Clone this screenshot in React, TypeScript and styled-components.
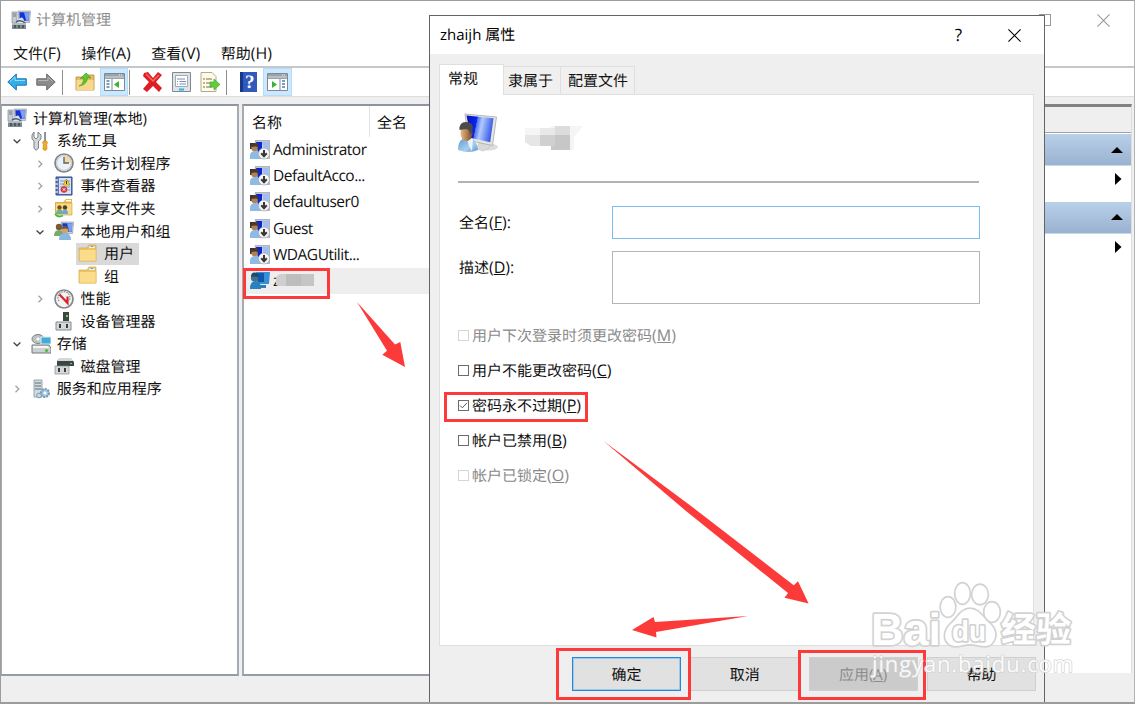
import React from 'react';
import styled, { createGlobalStyle, css } from 'styled-components';

const GlobalStyle = createGlobalStyle`
    * {
        box-sizing: border-box;
    }
    body {
        margin: 0;
        overflow: hidden;
        background: #efefef;
        color: #111;
        font: 15px/20px 'Open Sans', 'Noto Sans CJK SC', sans-serif;
        text-rendering: geometricPrecision;
    }
`;

const Screen = styled.div`
    position: relative;
    width: 1135px;
    height: 704px;
    overflow: hidden;
`;

const Window = styled.div`
    display: flex;
    flex-direction: column;
    width: 1135px;
    height: 704px;
    border: 1px solid #9c9c9c;
    border-bottom-width: 2px;
    border-right-color: #b4b4b4;
    background: #efefef;
`;

const TitleBar = styled.div`
    display: flex;
    align-items: center;
    height: 38px;
    padding: 0 24px 0 10px;
    background: #fff;
    color: #8e8e8e;
`;

const TitleText = styled.span`
    flex: 1;
    margin-left: 5px;
`;

const MaxBox = styled.span`
    width: 12px;
    height: 12px;
    margin-right: 46px;
    border: 1px solid #999;
`;

const MenuBar = styled.div`
    display: flex;
    align-items: center;
    gap: 20.5px;
    height: 27px;
    padding: 1px 12px 0;
    background: #fff;
`;

const Latin = styled.span`
    font-size: 16px;
`;

const Toolbar = styled.div`
    display: flex;
    align-items: center;
    height: 31px;
    padding-left: 3px;
    border-top: 2px solid #c3c8cc;
    border-bottom: 1px solid #dcdcdc;
    background: #fff;
`;

const ToolButton = styled.span<{ $width?: number; $active?: boolean }>`
    display: flex;
    align-items: center;
    justify-content: center;
    width: ${({ $width }) => $width || 28.7}px;
    height: 28px;
    ${({ $active }) => $active && css`
        background: #cce8ff;
        box-shadow: inset 0 0 0 1px #b5dcf8;
    `}
`;

const Separator = styled.span<{ $left: number; $right: number }>`
    width: 1px;
    height: 25px;
    margin: 0 ${({ $right }) => $right}px 0 ${({ $left }) => $left}px;
    background: #8d8d8d;
`;

const Panes = styled.div`
    display: grid;
    grid-template-columns: 238px 799px 1fr;
    column-gap: 3px;
    height: 572px;
    margin-top: 7px;
`;

const Pane = styled.div`
    border: 2px solid #a5abb2;
    border-top-color: #8f959d;
    border-bottom-color: #969ca4;
    background: #fff;
    overflow: hidden;
`;

const TreePane = styled(Pane)`
    border-left-width: 1px;
    padding-top: 1px;
`;

const TreeRow = styled.div<{ $level: number }>`
    display: flex;
    align-items: center;
    height: 22.55px;
    padding-left: ${({ $level }) => ($level ? $level * 23.7 - 16 : 5)}px;
    white-space: nowrap;
`;

const Arrow = styled.span`
    display: flex;
    justify-content: center;
    width: 14px;
    margin-right: 7px;
    padding-top: 1px;
`;

const TreeLabel = styled.span<{ $selected?: boolean }>`
    display: flex;
    align-items: center;
    gap: 6px;
    height: 22px;
    padding-right: 5px;
    ${({ $selected }) => $selected && css`
        background: #d9d9d9;
        box-shadow: -2px 0 #d9d9d9;
    `}
`;

const TreeText = styled.span`
    padding-top: 1px;
`;

const ListHeader = styled.div`
    display: flex;
    height: 30.5px;
    padding-left: 8px;
`;

const HeadCell = styled.span`
    width: 118px;
    margin-right: 7px;
    border-right: 1px solid #e2e2e2;
    height: 31px;
    line-height: 34px;
`;

const UserRow = styled.div<{ $selected?: boolean }>`
    display: flex;
    align-items: center;
    gap: 3px;
    height: 26.3px;
    padding-left: 6px;
    ${({ $selected }) => $selected && 'background: #eee;'}
`;

const UserName = styled.span`
    margin-top: -2px;
    font-size: 15.5px;
    letter-spacing: -.5px;
`;

const UserMosaic = styled.span`
    width: 38px;
    height: 12px;
    margin: -2px 0 0 -7px;
    border-radius: 5px 0 0 2px;
    background: linear-gradient(90deg, #cfcfcf 0 10px, #bdbdbd 10px 25px, #c5c5c5 25px);
`;

const ActionPane = styled.div`
    margin-right: 2px;
    border-top: 3px solid #828282;
    border-right: 1px solid #dedede;
    background: #fff;
    height: 569px;
`;

const ActionHead = styled.div`
    height: 26px;
    border-bottom: 1px solid #a0a0a0;
    background: #efefef;
    margin-bottom: 1px;
`;

const ActionGroup = styled.div`
    display: flex;
    align-items: center;
    justify-content: flex-end;
    height: 32px;
    padding-right: 8px;
    background: linear-gradient(#b9d0ea, #99b2d0);
    border-bottom: 1px solid #c2d8ef;
`;

const ActionItem = styled.div`
    display: flex;
    align-items: flex-start;
    justify-content: flex-end;
    height: 35.5px;
    padding: 7px 9px 0 0;
`;

const Dialog = styled.div`
    position: absolute;
    left: 429px;
    top: 15px;
    width: 616px;
    height: 687px;
    border: 1px solid #646464;
    border-bottom: none;
    background: #efefef;
`;

const DialogTitle = styled.div`
    display: flex;
    align-items: center;
    height: 38px;
    padding: 0 23px 0 10px;
    background: #fff;
    color: #000;
`;

const DialogName = styled.span`
    flex: 1;
`;

const HelpMark = styled.span`
    margin-right: 46px;
    padding-bottom: 1px;
    font-size: 17px;
`;

const TabStrip = styled.div`
    display: flex;
    align-items: flex-end;
    height: 40px;
    padding: 0 0 0 9px;
`;

const Tab = styled.div<{ $width: number; $inset?: number; $active?: boolean }>`
    width: ${({ $width }) => $width}px;
    height: 28px;
    padding: 4px 0 0 ${({ $inset }) => $inset || 4}px;
    border: 1px solid #dfdfdf;
    border-left: none;
    border-bottom: none;
    background: #f0f0f0;
    ${({ $active }) => $active && css`
        position: relative;
        height: 31px;
        margin-bottom: -1px;
        border-left: 1px solid #dfdfdf;
        background: #fff;
    `}
`;

const TabPanel = styled.div`
    width: 595px;
    height: 552px;
    margin-left: 9px;
    padding-left: 18px;
    border: 1px solid #dfdfdf;
    background: #fff;
`;

const Identity = styled.div`
    display: flex;
    width: 521px;
    height: 88px;
    margin-bottom: 23px;
    padding-top: 18px;
    border-bottom: 2px solid #b2b2b2;
`;

const NameMosaic = styled.svg`
    margin: 13px 0 0 27px;
`;

const Field = styled.div`
    display: grid;
    grid-template-columns: 154px 368px;
    margin-bottom: 12px;
`;

const FieldLabel = styled.label`
    padding: 6px 0 0 1px;
`;

const Input = styled.div<{ $height: number; $focus?: boolean }>`
    height: ${({ $height }) => $height}px;
    border: 1px solid ${({ $focus }) => ($focus ? '#7abcee' : '#b5b5b5')};
    background: #fff;
`;

const Options = styled.div`
    margin-top: 14px;
`;

const Option = styled.div<{ $disabled?: boolean }>`
    display: flex;
    align-items: center;
    gap: 3px;
    height: 35px;
    color: ${({ $disabled }) => ($disabled ? '#8a8a8a' : '#111')};
`;

const CheckBox = styled.span<{ $disabled?: boolean }>`
    display: flex;
    width: 11px;
    height: 11px;
    border: 1px solid ${({ $disabled }) => ($disabled ? '#d6d6d6' : '#6b6b6b')};
`;

const Buttons = styled.div`
    display: flex;
    gap: 9.3px;
    margin: 11px 0 0 142px;
`;

const Button = styled.div<{ $kind?: 'primary' | 'disabled' }>`
    width: 109px;
    height: 34px;
    border: 1px solid #cfcfcf;
    background: #e1e1e1;
    line-height: 35px;
    text-align: center;
    ${({ $kind }) => $kind === 'primary' && css`
        border-color: #2488da;
        box-shadow: inset 0 0 0 1px #a3c8e6;
    `}
    ${({ $kind }) => $kind === 'disabled' && css`
        background: #cbcbcb;
        color: #8b8b8b;
    `}
`;

const Highlight = styled.div<{ $x: number; $y: number; $w: number; $h: number }>`
    position: absolute;
    left: ${({ $x }) => $x}px;
    top: ${({ $y }) => $y}px;
    width: ${({ $w }) => $w}px;
    height: ${({ $h }) => $h}px;
    border: 3px solid #fb3a39;
`;

const Overlay = styled.svg`
    position: absolute;
    left: 0;
    top: 0;
`;

type IconName =
    | 'computer' | 'tools' | 'clock' | 'events' | 'share' | 'users' | 'folder' | 'perf'
    | 'device' | 'storage' | 'disk' | 'services' | 'userOff' | 'user';

const monitor = (
    <>
        <path d="M7 1h12.5l-.8 11.5H8z" fill="#c9ced6" stroke="#8e959f" strokeWidth=".6" />
        <path d="M8.3 2.2h10l-.6 8.6H8.9z" fill="#1433d2" />
        <path d="M13 2.2h5.3l-.6 8.6h-2.5z" fill="#7ca1f0" />
    </>
);

const shapes: Record<IconName, React.ReactNode> = {
    computer: (
        <>
            {monitor}
            <path d="M1 2h5v11H1z" fill="#c5ccd3" stroke="#838c94" strokeWidth=".7" />
            <path d="M2 4h3M2 6h3" stroke="#6f7880" />
            <path d="M8 9q4-4 5 2l1 3H5z" fill="#d7e3ef" />
            <path d="M5 12q5-3 9 1" fill="none" stroke="#565f66" strokeWidth="1.6" />
            <path d="M1 13h14v6H1z" fill="#7c898f" />
            <path d="M1 13h14v2H1z" fill="#b1bbc0" />
            <path d="M4 15v3M8 15v3M12 15v3" stroke="#3d484e" strokeWidth="1.5" />
        </>
    ),
    tools: (
        <>
            <path d="M3 1v5l2 2 2-2V1l3 3v4L7.5 10v7q-2.5 4-4.5 0v-7L1 8V4z" fill="#d3d7da" stroke="#7c8388" />
            <path d="M14 1v9" stroke="#8d959b" strokeWidth="2" />
            <path d="M12.5 10h3l1 2-1 1 .5 5q-2 3-4 0l.5-5-1-1z" fill="#f6ac22" stroke="#c88110" strokeWidth=".7" />
        </>
    ),
    clock: (
        <>
            <circle cx="10" cy="10" r="9" fill="#eaf1f7" stroke="#80868b" strokeWidth="1.7" />
            <circle cx="10" cy="10" r="7.4" fill="none" stroke="#c2c8cd" />
            <path d="M10 3a7 7 0 0 1 7 7h-7z" fill="#f6d9a2" />
            <path d="M10 4v6h5" fill="none" stroke="#59646c" strokeWidth="1.4" />
        </>
    ),
    events: (
        <>
            <path d="M2 1h16v18H2z" fill="#5b77b5" stroke="#324f87" />
            <path d="M5 2h12v16H5z" fill="#d8e4f5" />
            <path d="M6 5h10M6 8h10M6 11h10M6 14h10" stroke="#7e9acb" />
            <path d="M12.5 3l3.5 6H9z" fill="#ffd92e" stroke="#b28a0d" strokeWidth=".7" />
            <path d="M12.5 5v3" stroke="#443500" />
            <circle cx="10" cy="13.5" r="3.2" fill="#d8343c" />
            <path d="M8.7 12.2l2.6 2.6m0-2.6l-2.6 2.6" stroke="#fff" />
            <path d="M1 4h3M1 8h3M1 12h3M1 16h3" stroke="#d5d9df" strokeWidth="1.4" />
        </>
    ),
    share: (
        <>
            <path d="M1 4h8l3-3h6v15H1z" fill="#e6bb55" />
            <path d="M1.5 5h16.5v12H1.500z" fill="#fada82" stroke="#ca9a38" strokeWidth=".6" />
            <path d="M12 2h5v1.5h-5z" fill="#fff" />
            <circle cx="5.5" cy="9.5" r="2.2" fill="#74502f" />
            <circle cx="11" cy="9.5" r="2.2" fill="#4c3d35" />
            <path d="M2 16q0-4.5 3.5-4.5T9 16z" fill="#6db184" />
            <path d="M8 16q0-4.5 3-4.5t3 4.5z" fill="#6fa4d6" />
            <path d="M1 16q3 4 8 1.5" fill="none" stroke="#46b55e" strokeWidth="1.8" />
        </>
    ),
    users: (
        <>
            {monitor}
            <circle cx="5" cy="6" r="3.2" fill="#7b5a36" />
            <path d="M0 15q0-6 5-6t5 6z" fill="#79a86e" />
            <circle cx="11" cy="9" r="3.4" fill="#d1a36d" />
            <path d="M7.8 8q1-4 4-3.3t2.3 3.6q-2-1.3-6.3-.3" fill="#625448" />
            <path d="M5 19q0-7 6-7t6 7z" fill="#88b8e0" />
        </>
    ),
    folder: (
        <>
            <path d="M1 4h8l2-3h7v16H1z" fill="#edc463" stroke="#d6a848" strokeWidth=".7" />
            <path d="M11.5 2h5v2h-5z" fill="#fff" />
            <path d="M12.5 2h3v1.2h-3z" fill="#68a7d6" />
            <path d="M1.5 5.5h16.5v11.5h-16.500z" fill="#fbdc8a" stroke="#e6bd5d" strokeWidth=".6" />
        </>
    ),
    perf: (
        <>
            <circle cx="10" cy="10" r="9" fill="#f4f4f4" stroke="#81878a" strokeWidth="1.7" />
            <path d="M5 12a6 6 0 1 1 10 0" fill="none" stroke="#858585" strokeWidth="1.2" strokeDasharray="1.5 1" />
            <path d="M5.5 5.5l8 8.5V7.500" fill="none" stroke="#db232b" strokeWidth="2.2" />
        </>
    ),
    device: (
        <>
            <path d="M9 1h6v9H9z" fill="#3d4547" />
            <path d="M12 4h2v2h-2z" fill="#5de34d" />
            <path d="M2 11h15v8H2z" fill="#d4d8d9" stroke="#858b8e" />
            <path d="M5 13h2v4H5zM12 13h2v4h-2z" fill="#383e40" />
        </>
    ),
    storage: (
        <>
            <ellipse cx="7" cy="5" rx="6" ry="4.5" fill="#bec5c7" stroke="#798184" />
            <circle cx="7" cy="5" r="1.5" fill="#fff" />
            <path d="M10 3h10v7H10z" fill="#41acd8" stroke="#dce9ef" />
            <path d="M1 11h17l2 3v5H1z" fill="#cbd0d1" stroke="#737a7d" />
            <path d="M2 12h15l1 2H2z" fill="#f5f5f5" />
            <circle cx="15.5" cy="16.5" r="1.6" fill="#52bb35" />
        </>
    ),
    disk: (
        <>
            <path d="M5 3h12l3 3v4H3V5z" fill="#3e4547" />
            <path d="M5 2h12l2 3H3z" fill="#d5d8da" />
            <path d="M16 7h2v1h-2z" fill="#5de34d" />
            <path d="M1 10h14v8H1z" fill="#d4d8d9" stroke="#858b8e" strokeWidth=".7" />
            <path d="M4 12h2v4H4zM10 12h2v4h-2z" fill="#383e40" />
        </>
    ),
    services: (
        <>
            <path d="M3 1h8v17H3z" fill="#d1dce2" stroke="#84929a" strokeWidth=".8" />
            <path d="M4 4h6M4 7h6M4 10h6" stroke="#5b6f79" strokeWidth="1.2" />
            <circle cx="14" cy="14" r="4" fill="#a5c6df" stroke="#7198b5" strokeWidth="2" strokeDasharray="2 1" />
            <circle cx="14" cy="14" r="1.5" fill="#fff" />
            <circle cx="8" cy="16.5" r="2.4" fill="#c2d7e5" stroke="#7b9db6" />
        </>
    ),
    userOff: (
        <>
            <path d="M5 0h15v19H3z" fill="#aeb5be" />
            <path d="M6 1.5h12.5V15H7z" fill="#cfd9ed" />
            <path d="M6 2h6v11H8z" fill="#0c27ca" />
            <path d="M12 2h6.5v10h-4z" fill="#9fbcf6" />
            <path d="M0 3h5v6H0z" fill="#343434" />
            <circle cx="4.5" cy="8" r="3.2" fill="#b5804d" />
            <path d="M1 7q0-4 4-4t3.5 4q-3-1-7.5 0" fill="#493a30" />
            <path d="M0 19v-4q1-4 5-4t6 4v4z" fill="#8dbbe3" />
            <circle cx="14" cy="13.5" r="5.5" fill="#f7f7f7" stroke="#a8a8a8" strokeWidth=".7" />
            <path d="M14 10v6m-2.8-2.7L14 16.2l2.8-2.9" fill="none" stroke="#383838" strokeWidth="2" />
        </>
    ),
    user: (
        <>
            <path d="M6 1h14l-1 12H7z" fill="#3d8fcd" />
            <path d="M7 2h7v9H8z" fill="#0f58ac" />
            <path d="M14 2h5l-1 9h-3z" fill="#388eda" />
            <path d="M10 14h6v3h-6z" fill="#2b80b8" />
            <circle cx="4.5" cy="7" r="3.6" fill="#447389" />
            <path d="M1 6q0-5 4-4.5T8.5 6q-4-1-7.5 0" fill="#194d75" />
            <path d="M0 18q0-8 5.5-8t5.5 8z" fill="#2981be" />
        </>
    ),
};

const Icon = ({ name }: { name: IconName }) => (
    <svg width="20" height="20" viewBox="0 0 20 20">{shapes[name]}</svg>
);

const BigUser = () => (
    <svg width="40" height="42" viewBox="0 0 40 42">
        <defs>
            <linearGradient id="scr" x1="0" x2="1" y2=".2">
                <stop offset="0" stopColor="#0712b5" />
                <stop offset=".4" stopColor="#0b25ef" />
                <stop offset=".42" stopColor="#4f75f0" />
                <stop offset=".6" stopColor="#b3caff" />
                <stop offset="1" stopColor="#3b5de5" />
            </linearGradient>
            <linearGradient id="face" x2="1">
                <stop stopColor="#e8bb87" />
                <stop offset="1" stopColor="#7a4a24" />
            </linearGradient>
            <linearGradient id="shirt" x2="1" y2="1">
                <stop stopColor="#6398c5" />
                <stop offset=".6" stopColor="#a4cff2" />
                <stop offset="1" stopColor="#5d97c9" />
            </linearGradient>
        </defs>
        <ellipse cx="30" cy="34" rx="10" ry="3.5" fill="#dcdcdc" />
        <path d="M21 29l11 1-1 5-6 3-6-2z" fill="#d9d9d9" stroke="#bbb" strokeWidth=".5" />
        <path d="M7 1l31.5 3-4 28.5-24-5z" fill="#e4e4e4" stroke="#a9a9a9" strokeWidth=".8" />
        <path d="M8.5 2.5l27 2.8-3.3 24L13 25z" fill="url(#scr)" />
        <path d="M0 37q0-12 9-12 10 0 11 12-9 4-20 0" fill="url(#shirt)" />
        <path d="M9 26h6l-1 12-3-5z" fill="#edf4f9" />
        <ellipse cx="8.5" cy="20" rx="6" ry="8" fill="url(#face)" />
        <path d="M1.5 17Q1 9 8 9q9 0 6 10l-2 3q0-6-4-6z" fill="#4c4a48" />
    </svg>
);

const Chevron = ({ open }: { open?: boolean }) => (
    <svg width="8" height="8" viewBox="0 0 8 8" fill="none" stroke={open ? '#454545' : '#a2a2a2'} strokeWidth="1.3">
        <path d={open ? 'M.6 2.5L4 5.8l3.4-3.3' : 'M2.5.8L5.8 4 2.5 7.2'} />
    </svg>
);

const Cross = ({ color }: { color: string }) => (
    <svg width="13" height="13" viewBox="0 0 12 12" stroke={color}>
        <path d="M.4.4l11.2 11.2m0-11.2L.4 11.6" />
    </svg>
);

const NavArrow = ({ back }: { back?: boolean }) => (
    <svg width="20" height="18" viewBox="0 0 20 18">
        <path
            d={back ? 'M.8 9l8.5-8v4.8h10v6.4h-10V17z' : 'M19.2 9l-8.5-8v4.8H.8v6.4h9.9V17z'}
            fill={back ? '#35ade9' : '#8b8b8b'}
            stroke={back ? '#1975b7' : '#6b6b6b'}
        />
        <path d={back ? 'M3 8.5l5-4.7v3.7h10' : 'M2 7.5h10V4l4.8 4.5'} fill="none" stroke={back ? '#95dcfb' : '#b6b6b6'} />
    </svg>
);

const WindowIcon = ({ right }: { right?: boolean }) => (
    <svg width="21" height="18" viewBox="0 0 21 18">
        <path d="M.5.5h20v17H.5z" fill="#fff" stroke="#7f8991" />
        <path d="M1 1h19v5H1z" fill="#99a3ab" />
        <path d="M1 4h19" stroke="#d7dde2" />
        <path d="M15 2h1m1 0h1" stroke="#fff" />
        <path d={right ? 'M13 6v11' : 'M8 6v11'} stroke="#7f8991" />
        <path d={right ? 'M15 8h3m-3 3h3m-3 3h3' : 'M2.5 8h3m-3 3h3m-3 3h3'} stroke="#477faf" strokeWidth="1.5" />
        <path d={right ? 'M5 8v7l5-3.5z' : 'M15 8v7l-5-3.5z'} fill="#39b431" />
    </svg>
);

const tree: { label: string; level: number; icon: IconName; open?: boolean; selected?: boolean }[] = [
    { label: '计算机管理(本地)', level: 0, icon: 'computer' },
    { label: '系统工具', level: 1, icon: 'tools', open: true },
    { label: '任务计划程序', level: 2, icon: 'clock', open: false },
    { label: '事件查看器', level: 2, icon: 'events', open: false },
    { label: '共享文件夹', level: 2, icon: 'share', open: false },
    { label: '本地用户和组', level: 2, icon: 'users', open: true },
    { label: '用户', level: 3, icon: 'folder', selected: true },
    { label: '组', level: 3, icon: 'folder' },
    { label: '性能', level: 2, icon: 'perf', open: false },
    { label: '设备管理器', level: 2, icon: 'device' },
    { label: '存储', level: 1, icon: 'storage', open: true },
    { label: '磁盘管理', level: 2, icon: 'disk' },
    { label: '服务和应用程序', level: 1, icon: 'services', open: false },
];

const menus = [['文件', 'F'], ['操作', 'A'], ['查看', 'V'], ['帮助', 'H']];

const users = ['Administrator', 'DefaultAcco...', 'defaultuser0', 'Guest', 'WDAGUtilit...'];

const options = [
    { label: '用户下次登录时须更改密码', hotkey: 'M', disabled: true },
    { label: '用户不能更改密码', hotkey: 'C' },
    { label: '密码永不过期', hotkey: 'P', checked: true },
    { label: '帐户已禁用', hotkey: 'B' },
    { label: '帐户已锁定', hotkey: 'O', disabled: true },
];

const Tools = () => (
    <Toolbar>
        <ToolButton $width={26}><NavArrow back /></ToolButton>
        <ToolButton $width={31}><NavArrow /></ToolButton>
        <Separator $left={1} $right={8} />
        <ToolButton>
            <svg width="20" height="20" viewBox="0 0 20 20">
                <path d="M1 5h7l2-2h9v15H1z" fill="#e7bd60" stroke="#b68b3c" strokeWidth=".8" />
                <path d="M1.5 8h17v10h-17z" fill="#f8d98b" />
                <path d="M4 14q4-1 5-8L5.5 6.5 11 1l5 5-3.5-.2Q12 13 4 14z" fill="#5fc831" stroke="#319718" strokeWidth=".6" />
            </svg>
        </ToolButton>
        <ToolButton $active><WindowIcon /></ToolButton>
        <Separator $left={1} $right={8} />
        <ToolButton>
            <svg width="21" height="20" viewBox="0 0 21 20">
                <path d="M2 1l4-1 5 6 5-6 4 3-6 7 6 6-3 4-6-6-6 6-4-3 6-7-6-6z" fill="#df1d23" />
                <path d="M4 2l7 7 6-6" fill="none" stroke="#f56b6a" strokeWidth="1.5" />
            </svg>
        </ToolButton>
        <ToolButton>
            <svg width="19" height="20" viewBox="0 0 19 20">
                <path d="M.5.5h18v19H.5z" fill="#dfe3e5" stroke="#818a90" />
                <path d="M3.5 3.5h12v11h-12z" fill="#fff" stroke="#a0abb5" />
                <path d="M5 7h8M5 9.5h1m1.5 0H14M5 12h1m1.5 0H14" stroke="#6f91b3" />
                <path d="M7 17.5h5" stroke="#27b6ef" strokeWidth="2" />
            </svg>
        </ToolButton>
        <ToolButton>
            <svg width="20" height="20" viewBox="0 0 20 20">
                <path d="M1 .5h11l4 4v15H1z" fill="#fffbe4" stroke="#b3ab91" />
                <path d="M3 7h2m1 0h6M3 11h2m1 0h6M3 15h2m1 0h6" stroke="#776e5b" />
                <path d="M10 10h4V7l6 5.5-6 5.5v-3h-4z" fill="#63cb3c" stroke="#319d25" strokeWidth=".6" />
            </svg>
        </ToolButton>
        <Separator $left={2} $right={7} />
        <ToolButton>
            <svg width="17" height="20" viewBox="0 0 17 20">
                <path d="M0 0h17v20H0z" fill="#3158bd" />
                <path d="M0 0h3v20H0z" fill="#173886" />
                <text x="5" y="16" fontFamily="Liberation Serif, serif" fontSize="19" fontWeight="bold" fill="#fff">?</text>
            </svg>
        </ToolButton>
        <ToolButton $active><WindowIcon right /></ToolButton>
    </Toolbar>
);

const PropertiesDialog = () => (
    <Dialog>
        <DialogTitle>
            <DialogName>zhaijh 属性</DialogName>
            <HelpMark>?</HelpMark>
            <Cross color="#000" />
        </DialogTitle>
        <TabStrip>
            <Tab $width={65} $inset={8} $active>常规</Tab>
            <Tab $width={57}>隶属于</Tab>
            <Tab $width={74} $inset={7}>配置文件</Tab>
        </TabStrip>
        <TabPanel>
            <Identity>
                <BigUser />
                <NameMosaic width="58" height="24">
                    <path d="M0 2h24l4-2h30l-9 11v13H26v-4H6l-6-4z" fill="#f5f5f5" />
                    <path d="M0 9h15v11H6l-6-4z" fill="#e6e6e6" />
                    <path d="M15 2h15v7H15z" fill="#e9e9e9" />
                    <path d="M15 9h15v11H15z" fill="#d1cfcf" />
                    <path d="M30 0h15v9H30z" fill="#dcdcdc" />
                    <path d="M26 20h4V9h15v15H26z" fill="#c7c7c7" />
                </NameMosaic>
            </Identity>
            <Field>
                <FieldLabel>全名<Latin>(<u>F</u>):</Latin></FieldLabel>
                <Input $height={33} $focus />
            </Field>
            <Field>
                <FieldLabel>描述<Latin>(<u>D</u>):</Latin></FieldLabel>
                <Input $height={53} />
            </Field>
            <Options>
                {options.map((option) => (
                    <Option key={option.hotkey} $disabled={option.disabled}>
                        <CheckBox $disabled={option.disabled}>
                            {option.checked && (
                                <svg width="9" height="9" viewBox="0 0 9 9" fill="none" stroke="#555">
                                    <path d="M1 4.5l2.3 2.3L8 1.8" />
                                </svg>
                            )}
                        </CheckBox>
                        <span>{option.label}<Latin>(<u>{option.hotkey}</u>)</Latin></span>
                    </Option>
                ))}
            </Options>
        </TabPanel>
        <Buttons>
            <Button $kind="primary">确定</Button>
            <Button>取消</Button>
            <Button $kind="disabled">应用(<u>A</u>)</Button>
            <Button>帮助</Button>
        </Buttons>
    </Dialog>
);

const Watermark = () => (
    <g fill="#fff" stroke="#d2d2d2" strokeWidth="3.4" strokeLinejoin="round" paintOrder="stroke" fontWeight="bold">
        <text x="871" y="645" fontFamily="Liberation Sans, sans-serif" fontSize="45" textLength="70" lengthAdjust="spacingAndGlyphs">Bai</text>
        <ellipse cx="948" cy="607" rx="7" ry="9.5" />
        <ellipse cx="962.5" cy="593.5" rx="7" ry="10" />
        <ellipse cx="980" cy="594.5" rx="7.5" ry="9.5" />
        <ellipse cx="992" cy="612" rx="7.5" ry="9.5" />
        <path d="M970 609c-9 0-12 9-18 14-7 6-9 14-4 20 6 6 14 1 22 1s17 5 22-1 4-14-3-20c-6-5-10-14-19-14z" />
        <text x="952" y="641" fontFamily="Liberation Sans, sans-serif" fontSize="29" textLength="34" lengthAdjust="spacingAndGlyphs">du</text>
        <text x="1001" y="642" fontFamily="Noto Sans CJK SC, sans-serif" fontSize="35">经验</text>
        <text x="872" y="672" fontFamily="Open Sans, sans-serif" fontSize="22" fontWeight="normal" strokeWidth="1.6" opacity=".88" textLength="201">jingyan.baidu.com</text>
    </g>
);

const App = () => (
    <Screen>
        <GlobalStyle />
        <Window>
            <TitleBar>
                <Icon name="computer" />
                <TitleText>计算机管理</TitleText>
                <MaxBox />
                <Cross color="#999" />
            </TitleBar>
            <MenuBar>
                {menus.map(([label, hotkey]) => (
                    <span key={hotkey}>{label}<Latin>({hotkey})</Latin></span>
                ))}
            </MenuBar>
            <Tools />
            <Panes>
                <TreePane>
                    {tree.map((item) => (
                        <TreeRow key={item.label} $level={item.level}>
                            {item.level > 0 && (
                                <Arrow>{item.open !== undefined && <Chevron open={item.open} />}</Arrow>
                            )}
                            <TreeLabel $selected={item.selected}>
                                <Icon name={item.icon} />
                                <TreeText>{item.label}</TreeText>
                            </TreeLabel>
                        </TreeRow>
                    ))}
                </TreePane>
                <Pane>
                    <ListHeader>
                        <HeadCell>名称</HeadCell>
                        <HeadCell>全名</HeadCell>
                    </ListHeader>
                    {users.map((name) => (
                        <UserRow key={name}>
                            <Icon name="userOff" />
                            <UserName>{name}</UserName>
                        </UserRow>
                    ))}
                    <UserRow $selected>
                        <Icon name="user" />
                        <UserName>z</UserName>
                        <UserMosaic />
                    </UserRow>
                </Pane>
                <ActionPane>
                    <ActionHead />
                    <ActionGroup><svg width="12" height="6"><path d="M6 0l6 6H0z" /></svg></ActionGroup>
                    <ActionItem><svg width="7" height="12"><path d="M0 0l6.5 6L0 12z" /></svg></ActionItem>
                    <ActionGroup><svg width="12" height="6"><path d="M6 0l6 6H0z" /></svg></ActionGroup>
                    <ActionItem><svg width="7" height="12"><path d="M0 0l6.5 6L0 12z" /></svg></ActionItem>
                </ActionPane>
            </Panes>
        </Window>
        <PropertiesDialog />
        <Highlight $x={243} $y={268} $w={87} $h={31} />
        <Highlight $x={444} $y={392} $w={144} $h={30} />
        <Highlight $x={556} $y={648} $w={135} $h={52} />
        <Highlight $x={798} $y={650} $w={128} $h={50} />
        <Overlay width="1135" height="704">
            <g fill="#fb3a39">
                <path d="M357 302L395 344.5l5.3-2.5L405 367l-22.7-12.3 4.7-4z" />
                <path d="M603.5 441L691 506l102.700 79.300 4.300-4L808.600 603.600l-24.100-5.900 3.500-4.700L686 511z" />
                <path d="M632 630l21.5-13 1.5 5 93-6-92 16 .5 5.5z" />
            </g>
            <Watermark />
        </Overlay>
    </Screen>
);

export default App;
